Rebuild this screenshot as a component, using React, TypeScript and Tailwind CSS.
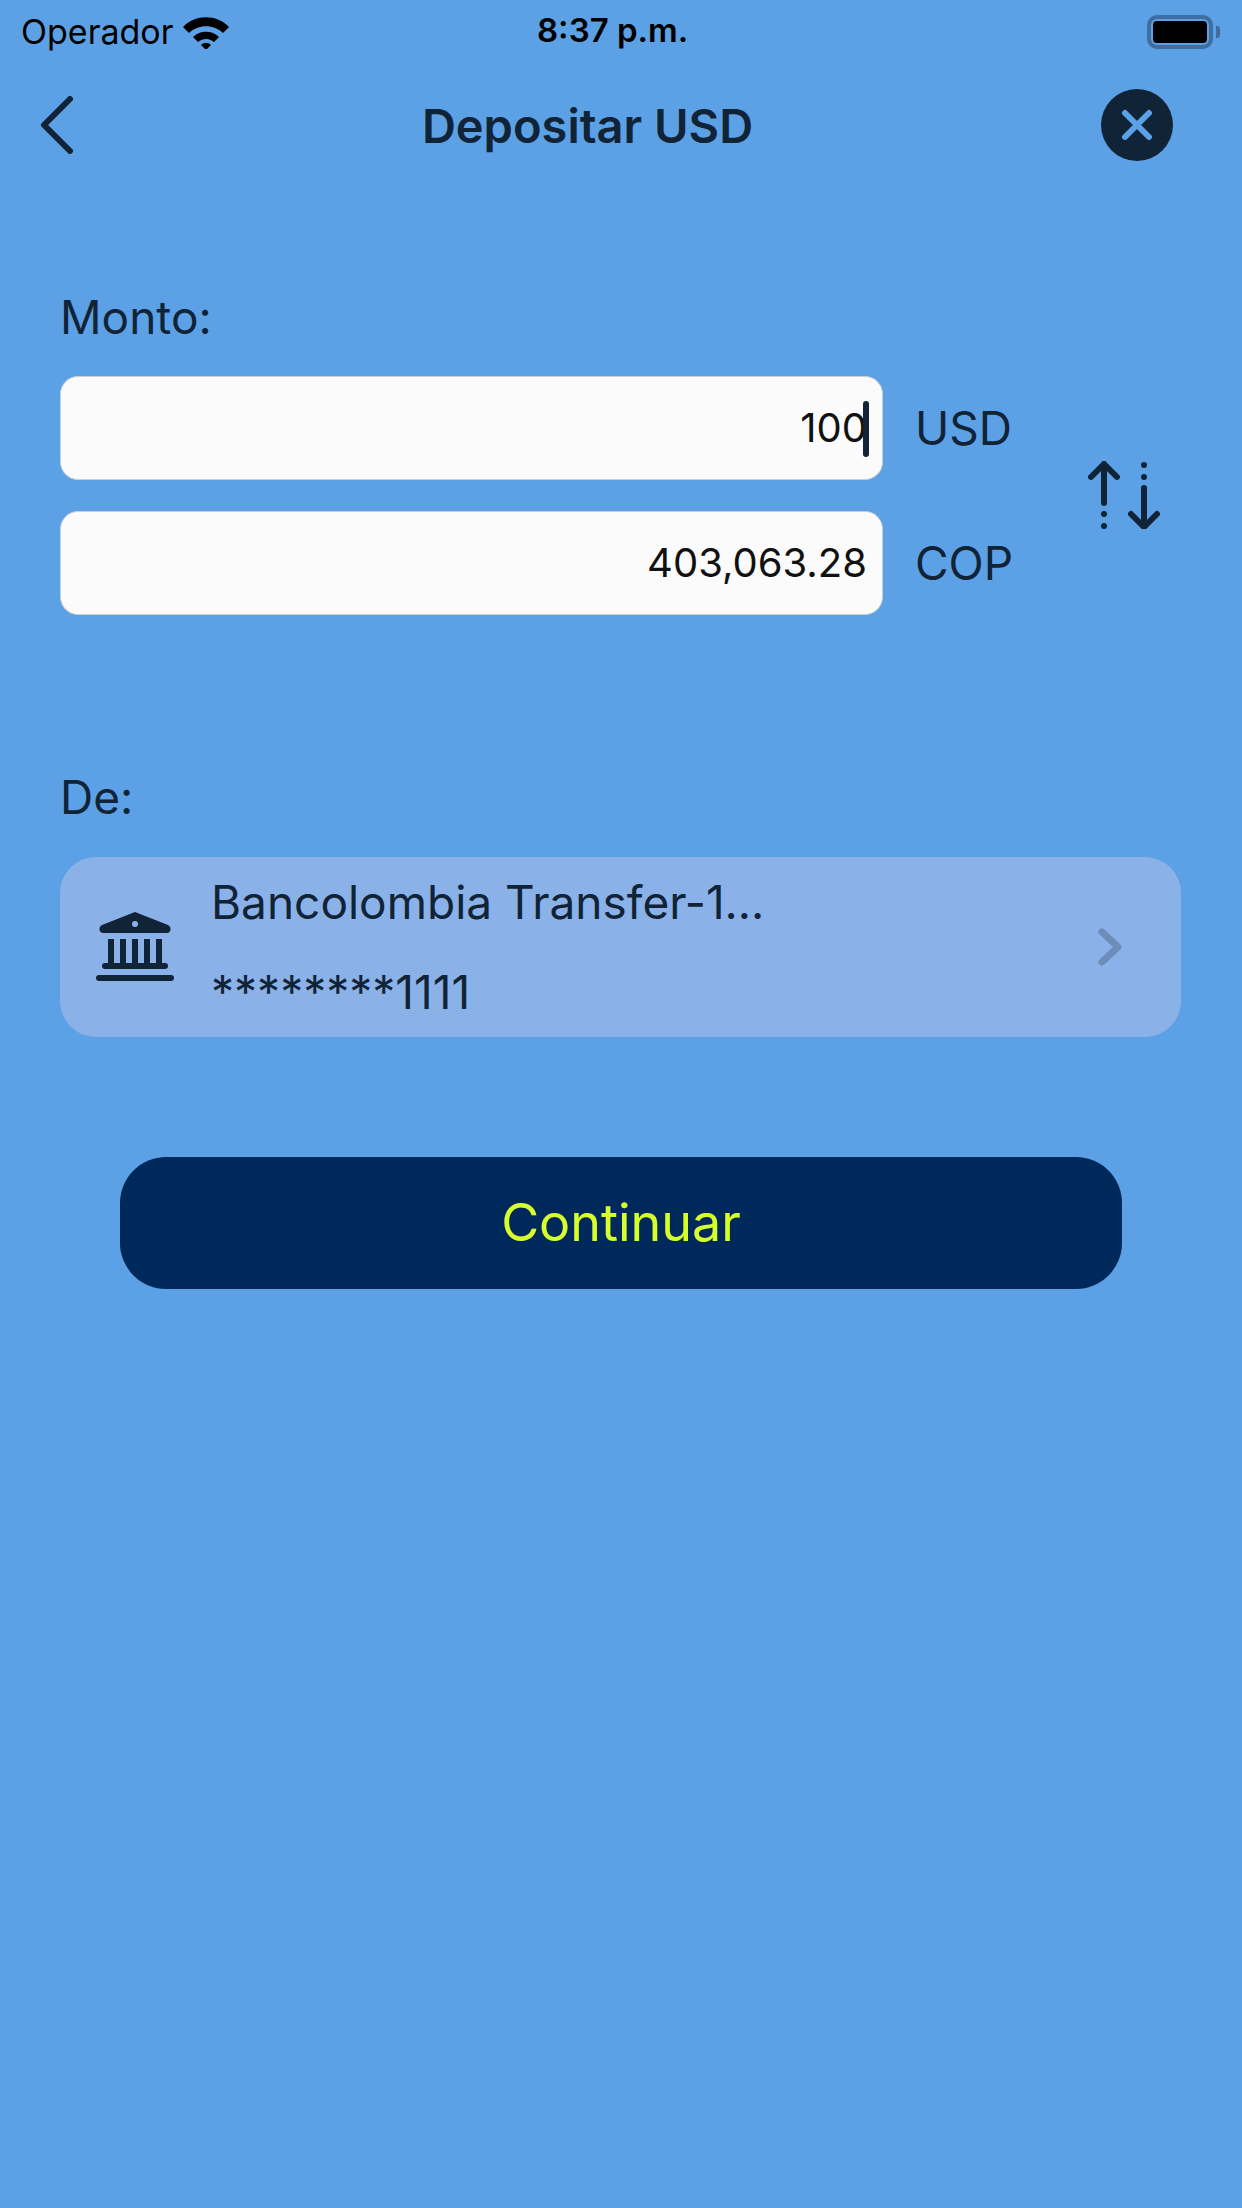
import React from "react";

const font = { fontFamily: "Inter" };

function StatusBar() {
  return (
    <div className="relative flex h-[64px] items-center justify-between pl-[21px] pr-[22px] text-black">
      <div className="flex items-center gap-[8px]">
        <span className="text-[34px] leading-none">Operador</span>
        <svg width="48" height="34" viewBox="0 0 48 34">
          <path d="M1 12C13 -1 35 -1 47 12L41 18C32 9 16 9 7 18Z" fill="#000" />
          <path d="M11 22C18 15 30 15 37 22L32 27C27 23 21 23 16 27Z" fill="#000" />
          <path d="M19 30C22 27 26 27 29 30L24 35Z" fill="#000" />
        </svg>
      </div>
      <span className="absolute left-[537px] top-[14px] text-[33px] leading-none font-semibold">8:37 p.m.</span>
      <div className="flex items-center gap-[3px]">
        <div className="flex h-[34px] w-[66px] items-center justify-center rounded-[10px] border-[4px] border-[#3f6d9f]">
          <div className="h-[22px] w-[54px] rounded-[4px] bg-black" />
        </div>
        <div className="h-[12px] w-[4px] rounded-r-[3px] bg-[#3f6d9f]" />
      </div>
    </div>
  );
}

function Header() {
  return (
    <div className="flex h-[122px] items-center justify-between pl-[38px] pr-[69px]">
      <svg width="36" height="58" viewBox="0 0 36 58" fill="none">
        <path d="M32 3L6 29L32 55" stroke="#112336" strokeWidth="6" strokeLinecap="round" strokeLinejoin="round" />
      </svg>
      <h1 className="text-[47px] leading-none font-semibold text-[#112336]">Depositar USD</h1>
      <div className="flex h-[72px] w-[72px] items-center justify-center rounded-full bg-[#112336]">
        <svg width="32" height="32" viewBox="0 0 32 32" fill="none">
          <path d="M4 4L28 28M28 4L4 28" stroke="#5ca1e5" strokeWidth="6" strokeLinecap="round" />
        </svg>
      </div>
    </div>
  );
}

function AmountRow({ value, unit, caret }: { value: string; unit: string; caret?: boolean }) {
  return (
    <div className="flex items-center gap-[32px]">
      <div className="relative flex h-[104px] w-[823px] items-center justify-end rounded-[18px] border border-[#c9cfd6] bg-[#fbfbfb] pr-[15px] text-[40px] text-[#111] leading-none">
        {value}
        {caret && <div className="absolute right-[13px] top-[24px] h-[56px] w-[6px] rounded-full bg-[#112336]" />}
      </div>
      <span className="text-[46px] leading-none text-[#112336]">{unit}</span>
    </div>
  );
}

function SwapIcon() {
  return (
    <svg width="76" height="68" viewBox="0 0 76 68" fill="none" stroke="#112336" strokeLinecap="round" strokeLinejoin="round">
      <path d="M16 3V42M3 16L16 3L29 16" strokeWidth="6" />
      <path d="M56 27V66M43 53L56 66L69 53" strokeWidth="6" />
      <g fill="#112336" stroke="none">
        <circle cx="16" cy="53" r="3" />
        <circle cx="16" cy="65" r="3" />
        <circle cx="56" cy="4" r="3" />
        <circle cx="56" cy="16" r="3" />
      </g>
    </svg>
  );
}

function BankIcon() {
  return (
    <svg width="78" height="70" viewBox="0 0 78 70" fill="#112336">
      <path d="M39 0L72 13C76 15 75 21 71 21H7C3 21 2 15 6 13Z" />
      <circle cx="39" cy="12" r="3" fill="#8ab2e8" />
      <rect x="12" y="27" width="6" height="25" />
      <rect x="24" y="27" width="6" height="25" />
      <rect x="36" y="27" width="6" height="25" />
      <rect x="48" y="27" width="6" height="25" />
      <rect x="60" y="27" width="6" height="25" />
      <rect x="6" y="51" width="66" height="6" rx="3" />
      <rect x="0" y="63" width="78" height="6" rx="3" />
    </svg>
  );
}

export default function App() {
  return (
    <div className="h-[2208px] w-[1242px] overflow-hidden bg-[#5ca1e5]" style={font}>
      <StatusBar />
      <Header />

      <div className="px-[60px]">
        <p className="mt-[108px] text-[46px] leading-none text-[#112336]">Monto:</p>
        <div className="mt-[36px] flex items-center">
          <div className="flex flex-col gap-[31px]">
            <AmountRow value="100" unit="USD" caret />
            <AmountRow value="403,063.28" unit="COP" />
          </div>
          <div className="ml-[75px] mt-[-2px]">
            <SwapIcon />
          </div>
        </div>

        <p className="mt-[159px] text-[46px] leading-none text-[#112336]">De:</p>
        <div className="mt-[37px] flex h-[180px] w-[1121px] items-center rounded-[36px] bg-[#8ab2e8] pl-[36px] pr-[58px]">
          <BankIcon />
          <div className="ml-[37px] flex flex-1 flex-col gap-[44px] text-[46px] leading-none text-[#112336]">
            <span>Bancolombia Transfer-1...</span>
            <span>********1111</span>
          </div>
          <svg width="26" height="38" viewBox="0 0 26 38" fill="none">
            <path d="M5 4L21 19L5 34" stroke="#6b8db8" strokeWidth="7" strokeLinecap="round" strokeLinejoin="round" />
          </svg>
        </div>

        <button className="mx-[60px] mt-[120px] flex h-[132px] w-[1002px] items-center justify-center rounded-[46px] bg-[#00295b] text-[52px] leading-none text-[#d8ff2b]">
          Continuar
        </button>
      </div>
    </div>
  );
}
